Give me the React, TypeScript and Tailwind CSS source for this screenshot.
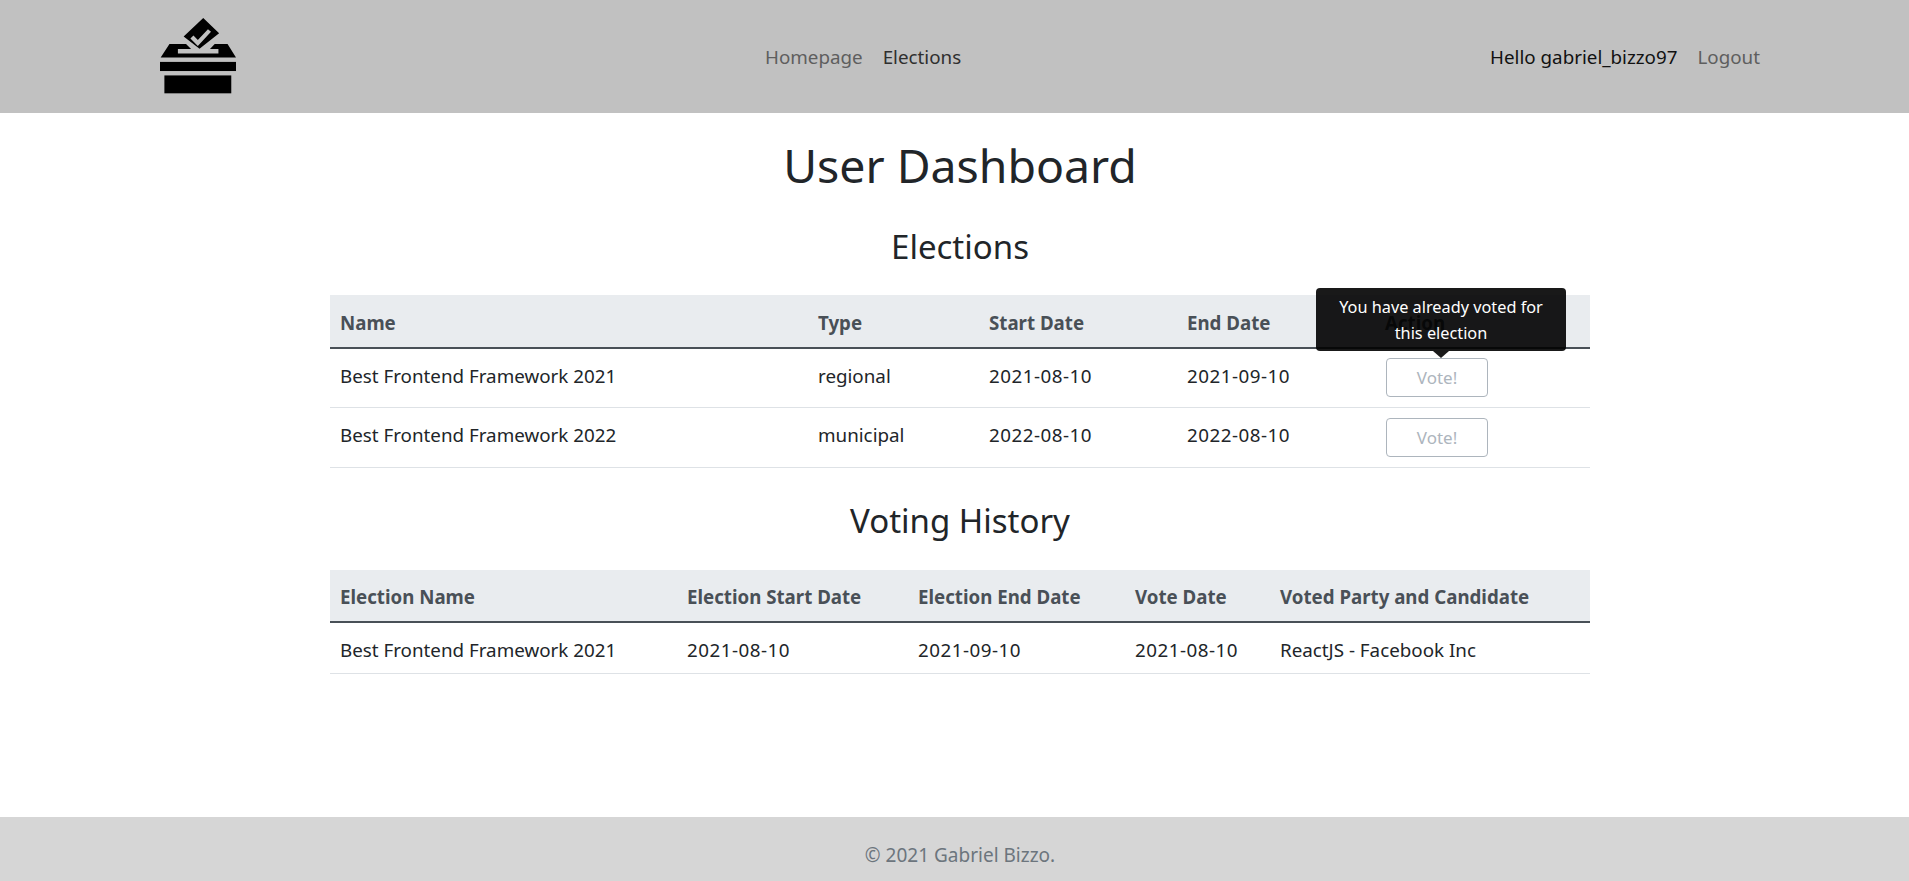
const font = { fontFamily: '"Noto Sans", sans-serif' };

function Logo() {
  return (
    <svg width="76" height="76" viewBox="60 55 225 225" fill="#000" className="mb-[2px]">
      <path
        d="M188 55 L235 100 L177 146 L130 110 Z M150 116 L172 138 L211 96 L202 88 L172 120 L159 107 Z"
        fillRule="evenodd"
      />
      <path d="M88 132 L137 132 L152 147 L113 147 L113 160 L233 160 L233 147 L208 147 L222 132 L260 132 L285 172 L62 172 Z" />
      <rect x="60" y="185" width="225" height="27" />
      <rect x="73" y="225" width="198" height="53" />
    </svg>
  );
}

function Th({ children, w }: { children?: React.ReactNode; w: string }) {
  return (
    <th className={`${w} h-[53px] border-b-2 border-[#495057] px-[10px] pt-[4px] text-left text-[18.7px] font-bold text-[#495057]`}>
      {children}
    </th>
  );
}

function Th2({ children, w }: { children?: React.ReactNode; w: string }) {
  return (
    <th className={`${w} h-[52px] border-b-2 border-[#495057] px-[10px] pt-[3px] text-left text-[18.7px] font-bold text-[#495057]`}>
      {children}
    </th>
  );
}

function Td({ children }: { children?: React.ReactNode }) {
  return <td className="border-b border-[#dee2e6] px-[10px] pb-[8px] pt-[12px] align-top text-[18.8px] leading-[30px] text-[#212529]">{children}</td>;
}

function DateCell({ children }: { children?: React.ReactNode }) {
  return <td className="border-b border-[#dee2e6] px-[10px] pb-[8px] pt-[12px] align-top text-[18.8px] leading-[30px] tracking-[0.5px] text-[#212529]">{children}</td>;
}

function VoteButton() {
  return (
    <button className="block h-[39px] w-[102px] rounded-[4px] border border-[#adb5bd] bg-white text-[17px] text-[#adb5bd]">Vote!</button>
  );
}

export default function App() {
  return (
    <div className="flex min-h-[881px] flex-col bg-white" style={font}>
      <header className="flex h-[113px] items-center justify-between bg-[#c1c1c1] pl-[160px] pr-[149px]">
        <Logo />
        <nav className="flex gap-[20px] pt-[1px] text-[18.8px]">
          <a className="text-[#5e5e5e]">Homepage</a>
          <a className="text-[#2f2f2f]">Elections</a>
        </nav>
        <div className="flex gap-[20px] pt-[1px] text-[18.8px]">
          <span className="text-[#111]">Hello gabriel_bizzo97</span>
          <a className="text-[#5e5e5e]">Logout</a>
        </div>
      </header>
      <main className="flex-1 pl-[330px] pr-[319px]">
        <h1 className="mt-[18px] text-center text-[46.4px] leading-[68px] text-[#212529]">User Dashboard</h1>
        <h2 className="mt-[26px] text-center text-[33px] leading-[44px] text-[#212529]">Elections</h2>
        <table className="mt-[26px] w-full table-fixed border-collapse">
          <thead className="bg-[#e9ecef]">
            <tr>
              <Th w="w-[478px]">Name</Th>
              <Th w="w-[171px]">Type</Th>
              <Th w="w-[198px]">Start Date</Th>
              <Th w="w-[198px]">End Date</Th>
              <Th w="w-[215px]">Action</Th>
            </tr>
          </thead>
          <tbody>
            <tr className="h-[59px]">
              <Td>Best Frontend Framework 2021</Td>
              <Td>regional</Td>
              <DateCell>2021-08-10</DateCell>
              <DateCell>2021-09-10</DateCell>
              <td className="border-b border-[#dee2e6] pb-[10px] pl-[11px] pr-[10px] pt-[9px] align-top">
                <div className="relative">
                  <VoteButton />
                  <div className="absolute bottom-[46px] left-[-70px] w-[250px] rounded-[4px] bg-black/90 px-[10px] pb-[5px] pt-[6px] text-center text-[16.3px] leading-[26px] text-white">
                    You have already voted for this election
                    <div className="absolute bottom-[-7px] left-[117px] h-0 w-0 border-x-[8px] border-t-[7px] border-x-transparent border-t-black/90" />
                  </div>
                </div>
              </td>
            </tr>
            <tr className="h-[60px]">
              <Td>Best Frontend Framework 2022</Td>
              <Td>municipal</Td>
              <DateCell>2022-08-10</DateCell>
              <DateCell>2022-08-10</DateCell>
              <td className="border-b border-[#dee2e6] pb-[10px] pl-[11px] pr-[10px] pt-[10px] align-top"><VoteButton /></td>
            </tr>
          </tbody>
        </table>
        <h2 className="mt-[31px] text-center text-[33px] leading-[44px] text-[#212529]">Voting History</h2>
        <table className="mt-[27px] w-full table-fixed border-collapse">
          <thead className="bg-[#e9ecef]">
            <tr>
              <Th2 w="w-[347px]">Election Name</Th2>
              <Th2 w="w-[231px]">Election Start Date</Th2>
              <Th2 w="w-[217px]">Election End Date</Th2>
              <Th2 w="w-[145px]">Vote Date</Th2>
              <Th2 w="w-[320px]">Voted Party and Candidate</Th2>
            </tr>
          </thead>
          <tbody>
            <tr>
              <Td>Best Frontend Framework 2021</Td>
              <DateCell>2021-08-10</DateCell>
              <DateCell>2021-09-10</DateCell>
              <DateCell>2021-08-10</DateCell>
              <Td>ReactJS - Facebook Inc</Td>
            </tr>
          </tbody>
        </table>
      </main>
      <footer className="flex h-[64px] items-center justify-center bg-[#d6d6d6] pl-[11px] pt-[12px] text-[19px] text-[#6c757d]">© 2021 Gabriel Bizzo.</footer>
    </div>
  );
}
